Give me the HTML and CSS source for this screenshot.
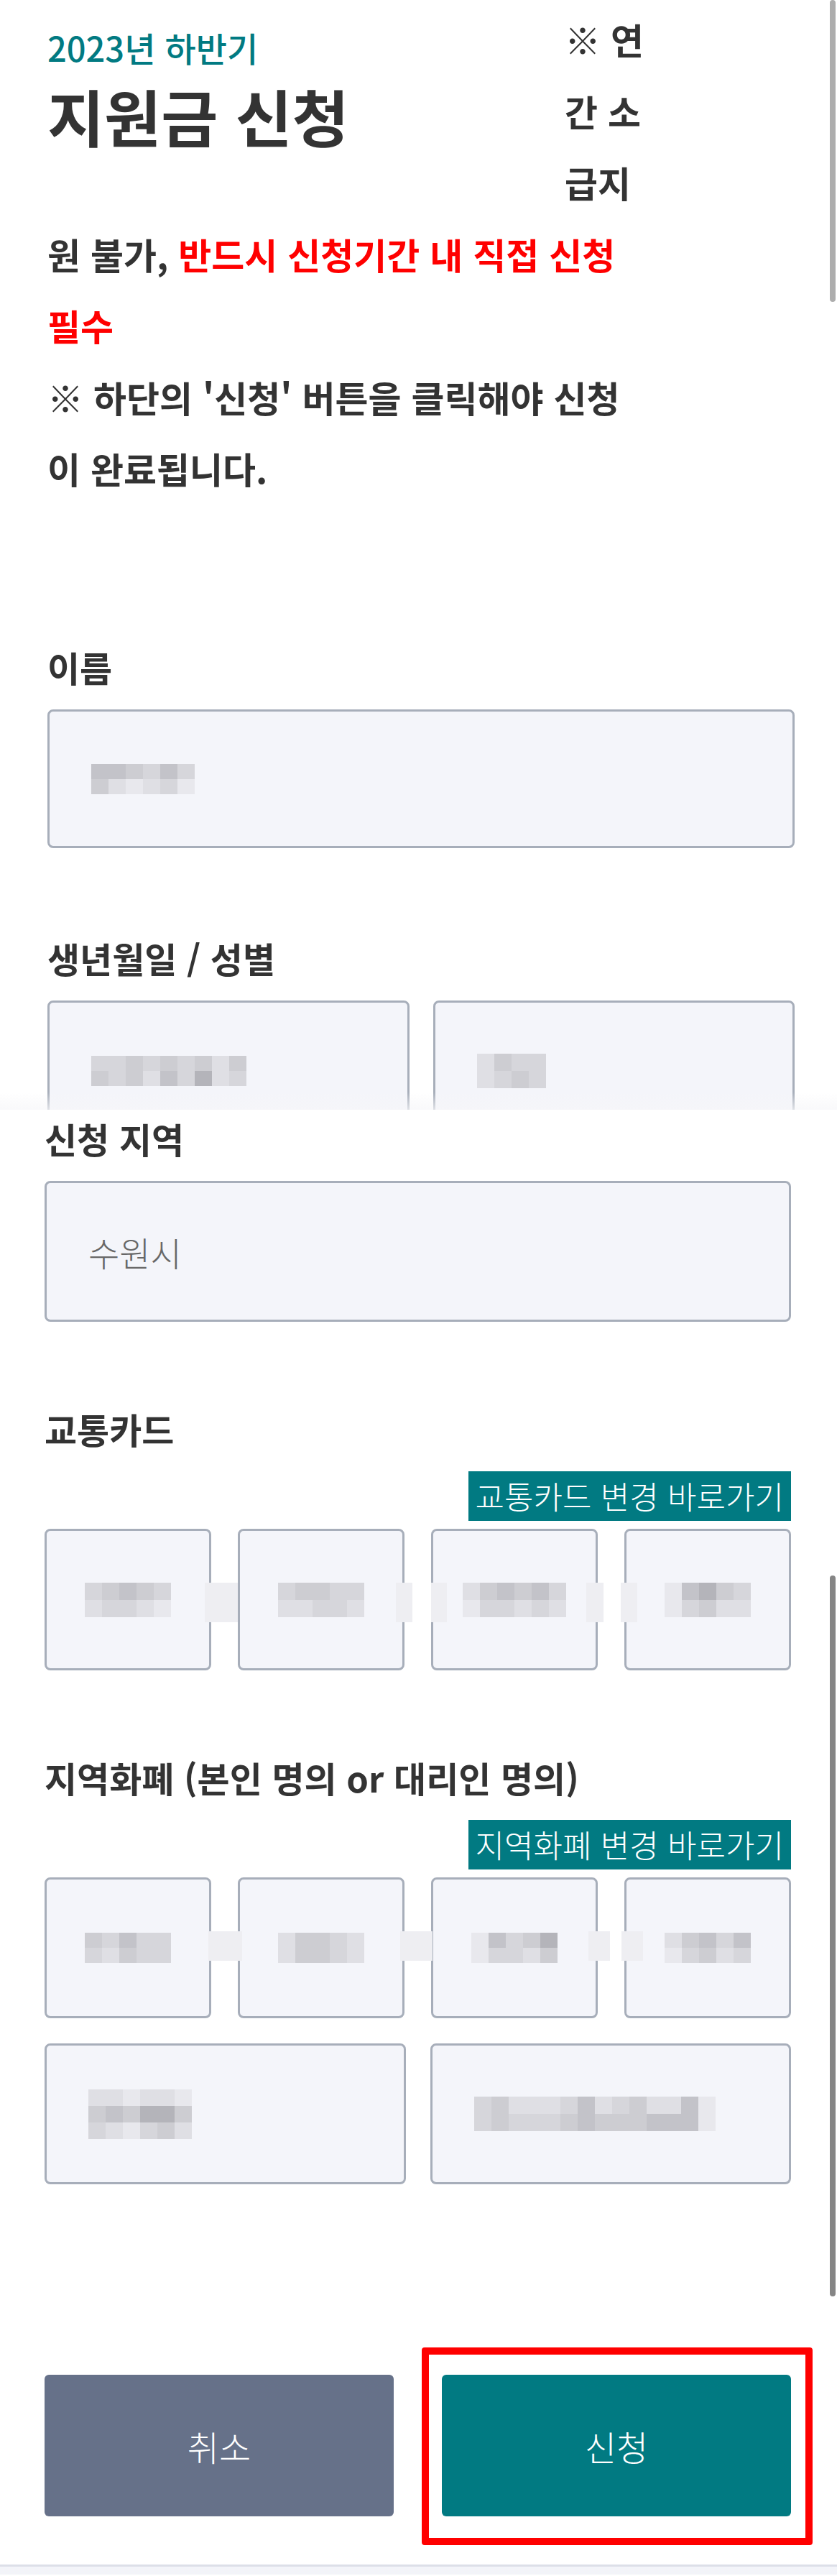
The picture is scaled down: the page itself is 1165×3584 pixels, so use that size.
FILE: index.html
```html
<!DOCTYPE html>
<html lang="ko">
<head>
  <meta charset="UTF-8">
  <title>지원금 신청</title>
  <link rel="stylesheet" href="styles.css">
</head>
<body>

<div class="sheet top">

  <div class="notice">
    <div class="heading">
      <p class="period">2023년 하반기</p>
      <h1 class="title">지원금 신청</h1>
    </div>
    <span>※ 연간 소급지</span><span>원 불가, </span><span class="warn">반드시 신청기간 내 직접 신청 필수</span><br>
    <span>※ 하단의 '신청' 버튼을 클릭해야 신청이 완료됩니다.</span>
  </div>

  <div class="field name">
    <p class="label">이름</p>
    <div class="box">
      <div class="mosaic c6 thin">
        <span class="g2"></span><span class="g2"></span><span class="g3"></span><span class="g4"></span><span class="g2"></span><span class="g4"></span>
        <span class="g3"></span><span class="g5"></span><span class="g6"></span><span class="g5"></span><span class="g4"></span><span class="g6"></span>
      </div>
    </div>
  </div>

  <div class="field birth">
    <p class="label">생년월일 / 성별</p>
    <div class="pair">
      <div class="box">
        <div class="mosaic c9 thin">
          <span class="g4"></span><span class="g4"></span><span class="g3"></span><span class="g4"></span><span class="g3"></span><span class="g4"></span><span class="g3"></span><span class="g5"></span><span class="g3"></span>
          <span class="g3"></span><span class="g4"></span><span class="g3"></span><span class="g5"></span><span class="g2"></span><span class="g4"></span><span class="g1"></span><span class="g5"></span><span class="g4"></span>
        </div>
      </div>
      <div class="box">
        <div class="mosaic c4">
          <span class="g5"></span><span class="g3"></span><span class="g4"></span><span class="g4"></span>
          <span class="g5"></span><span class="g4"></span><span class="g3"></span><span class="g4"></span>
        </div>
      </div>
    </div>
  </div>

</div>

<div class="sheet bottom">

  <div class="field region">
    <p class="label">신청 지역</p>
    <div class="box"><span class="value">수원시</span></div>
  </div>

  <div class="field">
    <p class="label">교통카드</p>
    <div class="link-row"><span class="badge">교통카드 변경 바로가기</span></div>
    <div class="quad card">
      <div class="box">
        <div class="mosaic c5">
          <span class="g4"></span><span class="g3"></span><span class="g2"></span><span class="g3"></span><span class="g4"></span>
          <span class="g5"></span><span class="g4"></span><span class="g4"></span><span class="g5"></span><span class="g6"></span>
        </div>
      </div>
      <div class="box">
        <div class="mosaic c5">
          <span class="g4"></span><span class="g3"></span><span class="g3"></span><span class="g4"></span><span class="g4"></span>
          <span class="g5"></span><span class="g5"></span><span class="g4"></span><span class="g4"></span><span class="g5"></span>
        </div>
      </div>
      <div class="box">
        <div class="mosaic c6">
          <span class="g5"></span><span class="g3"></span><span class="g2"></span><span class="g3"></span><span class="g2"></span><span class="g4"></span>
          <span class="g6"></span><span class="g4"></span><span class="g4"></span><span class="g5"></span><span class="g4"></span><span class="g5"></span>
        </div>
      </div>
      <div class="box">
        <div class="mosaic c5">
          <span class="g6"></span><span class="g2"></span><span class="g1"></span><span class="g3"></span><span class="g4"></span>
          <span class="g6"></span><span class="g4"></span><span class="g3"></span><span class="g5"></span><span class="g5"></span>
        </div>
      </div>
      <span class="smudge s1"></span><span class="smudge s2"></span><span class="smudge s3"></span><span class="smudge s4"></span><span class="smudge s5"></span>
    </div>
  </div>

  <div class="field">
    <p class="label">지역화폐 (본인 명의 or 대리인 명의)</p>
    <div class="link-row"><span class="badge">지역화폐 변경 바로가기</span></div>
    <div class="quad money">
      <div class="box">
        <div class="mosaic c5 thin">
          <span class="g3"></span><span class="g4"></span><span class="g2"></span><span class="g4"></span><span class="g4"></span>
          <span class="g4"></span><span class="g5"></span><span class="g3"></span><span class="g4"></span><span class="g4"></span>
        </div>
      </div>
      <div class="box">
        <div class="mosaic c5 thin">
          <span class="g5"></span><span class="g3"></span><span class="g3"></span><span class="g4"></span><span class="g5"></span>
          <span class="g5"></span><span class="g3"></span><span class="g3"></span><span class="g4"></span><span class="g5"></span>
        </div>
      </div>
      <div class="box">
        <div class="mosaic c5 thin">
          <span class="g6"></span><span class="g2"></span><span class="g4"></span><span class="g3"></span><span class="g1"></span>
          <span class="g6"></span><span class="g4"></span><span class="g4"></span><span class="g5"></span><span class="g3"></span>
        </div>
      </div>
      <div class="box">
        <div class="mosaic c5 thin">
          <span class="g5"></span><span class="g3"></span><span class="g2"></span><span class="g4"></span><span class="g2"></span>
          <span class="g6"></span><span class="g4"></span><span class="g3"></span><span class="g5"></span><span class="g4"></span>
        </div>
      </div>
      <span class="smudge s6"></span><span class="smudge s7"></span><span class="smudge s8"></span><span class="smudge s9"></span>
    </div>
    <div class="pair">
      <div class="box">
        <div class="mosaic c6 mid">
          <span class="g5"></span><span class="g5"></span><span class="g6"></span><span class="g5"></span><span class="g5"></span><span class="g6"></span>
          <span class="g3"></span><span class="g2"></span><span class="g3"></span><span class="g1"></span><span class="g1"></span><span class="g3"></span>
          <span class="g4"></span><span class="g5"></span><span class="g6"></span><span class="g4"></span><span class="g3"></span><span class="g5"></span>
        </div>
      </div>
      <div class="box">
        <div class="mosaic c14">
          <span class="g4"></span><span class="g3"></span><span class="g5"></span><span class="g5"></span><span class="g5"></span><span class="g4"></span><span class="g2"></span><span class="g5"></span><span class="g4"></span><span class="g3"></span><span class="g5"></span><span class="g5"></span><span class="g2"></span><span class="g6"></span>
          <span class="g4"></span><span class="g3"></span><span class="g4"></span><span class="g4"></span><span class="g4"></span><span class="g3"></span><span class="g2"></span><span class="g3"></span><span class="g3"></span><span class="g3"></span><span class="g2"></span><span class="g2"></span><span class="g2"></span><span class="g6"></span>
        </div>
      </div>
    </div>
  </div>

  <div class="actions">
    <button class="btn cancel" type="button">취소</button>
    <button class="btn submit" type="button">신청</button>
    <span class="mark"></span>
  </div>

</div>

<div class="footer"></div>

<span class="thumb one"></span>
<span class="thumb two"></span>

</body>
</html>
```

FILE: styles.css
```css
body {
  margin: 0;
  font-family: "Noto Sans CJK KR", "Noto Sans", sans-serif;
  color: #333;
  background: #fff;
  position: relative;
}
p {
  margin: 0;
}
.sheet {
  box-sizing: border-box;
}
.top {
  height: 1544px;
  overflow: hidden;
  padding: 0 59px 0 66px;
  position: relative;
}
.top::after {
  content: "";
  position: absolute;
  left: 0;
  right: 0;
  bottom: 0;
  height: 24px;
  background: linear-gradient(rgba(255, 255, 255, 0), rgba(246, 246, 249, 0.7));
}
.bottom {
  padding: 10px 64px 0 62px;
}

/* header */
.notice {
  width: 839px;
  padding-top: 5px;
  font-size: 50px;
  font-weight: 700;
  line-height: 99.5px;
}
.heading {
  float: left;
  width: 720px;
  margin: 28px 0 40px;
}
.period {
  font-size: 47px;
  line-height: 66px;
  font-weight: 500;
  color: #017a82;
}
.title {
  margin: 0;
  font-size: 86px;
  line-height: 124px;
  font-weight: 700;
}
.warn {
  color: #f00;
}

/* fields */
.field {
  margin-top: 119px;
}
.name {
  margin-top: 196.5px;
}
.birth {
  margin-top: 123px;
}
.region {
  margin-top: 0;
}
.label {
  margin-bottom: 29px;
  font-size: 49px;
  line-height: 60px;
  font-weight: 700;
}
.box {
  box-sizing: border-box;
  height: 196px;
  border: 3px solid #a7aeba;
  border-radius: 8px;
  background: #f4f5fa;
  display: flex;
  align-items: center;
  padding-left: 58px;
}
.name .box {
  height: 193px;
}
.value {
  font-size: 47px;
  font-weight: 300;
  color: #676767;
}
.pair {
  display: grid;
  grid-template-columns: 1fr 1fr;
  gap: 34px;
}
.birth .pair {
  gap: 33px;
}
.quad {
  display: grid;
  grid-template-columns: repeat(4, 1fr);
  gap: 37px;
  position: relative;
}
.quad .box {
  padding: 0;
  justify-content: center;
}
.card .box {
  height: 197px;
}
.quad + .pair {
  margin-top: 35px;
}
.link-row {
  display: flex;
  justify-content: flex-end;
  margin-bottom: 11px;
}
.badge {
  background: #017a82;
  color: #fff;
  font-size: 44px;
  font-weight: 300;
  line-height: 69px;
  padding: 0 10px;
}

/* blurred values */
.mosaic {
  display: grid;
  grid-auto-rows: 24px;
}
.mosaic.thin {
  grid-auto-rows: 21px;
}
.mosaic.mid {
  grid-auto-rows: 23px;
}
.c4 { grid-template-columns: repeat(4, 24px); }
.c5 { grid-template-columns: repeat(5, 24px); }
.c6 { grid-template-columns: repeat(6, 24px); }
.c9 { grid-template-columns: repeat(9, 24px); }
.c14 { grid-template-columns: repeat(14, 24px); }
.g1 { background: #b4b4ba; }
.g2 { background: #c3c3c9; }
.g3 { background: #cdcdd2; }
.g4 { background: #d6d6db; }
.g5 { background: #dfdfe4; }
.g6 { background: #e8e8ed; }
.smudge {
  position: absolute;
  top: 75px;
  height: 55px;
  background: #eeeef2;
}
.money .smudge {
  height: 41px;
}
.s1 { left: 223px; width: 46px; }
.s2 { left: 489px; width: 23px; }
.s3 { left: 538px; width: 22px; }
.s4 { left: 754px; width: 24px; }
.s5 { left: 802px; width: 23px; }
.s6 { left: 228px; width: 47px; }
.s7 { left: 495px; width: 45px; }
.s8 { left: 757px; width: 30px; }
.s9 { left: 803px; width: 30px; }

/* buttons */
.actions {
  display: flex;
  gap: 67px;
  margin-top: 265px;
  position: relative;
}
.btn {
  flex: 1;
  height: 197px;
  border: 0;
  border-radius: 6px;
  color: #fff;
  font-family: "Noto Sans CJK KR", "Noto Sans", sans-serif;
  font-size: 48px;
  font-weight: 300;
}
.cancel {
  background: #667189;
}
.submit {
  background: #017a82;
}
.mark {
  position: absolute;
  left: 525px;
  top: -38px;
  width: 544px;
  height: 275px;
  box-sizing: border-box;
  border: 10px solid #f00;
  border-radius: 4px;
}
.footer {
  margin-top: 67px;
  height: 14px;
  box-sizing: border-box;
  border-top: 3px solid #dcdfe8;
  background: #f3f4f9;
}
.thumb {
  position: absolute;
  left: 1155px;
  width: 8px;
  border-radius: 4px;
}
.thumb.one {
  top: 0;
  height: 420px;
  background: #adadad;
}
.thumb.two {
  top: 2192px;
  height: 1003px;
  background: #858585;
}
```
